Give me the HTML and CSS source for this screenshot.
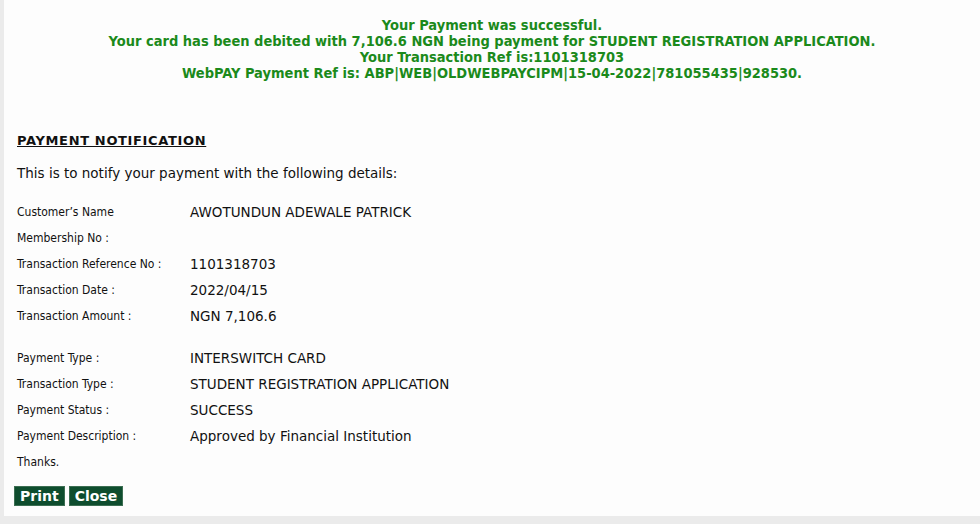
FILE: index.html
```html
<!DOCTYPE html>
<html>
<head>
<meta charset="utf-8">
<link rel="stylesheet" href="styles.css">
</head>
<body>
<div class="panel">
  <div class="banner">
    <div>Your Payment was successful.</div>
    <div>Your card has been debited with 7,106.6 NGN being payment for STUDENT REGISTRATION APPLICATION.</div>
    <div>Your Transaction Ref is:1101318703</div>
    <div>WebPAY Payment Ref is: ABP|WEB|OLDWEBPAYCIPM|15-04-2022|781055435|928530.</div>
  </div>
  <div class="content">
    <h2 class="title">PAYMENT NOTIFICATION</h2>
    <p class="intro">This is to notify your payment with the following details:</p>
    <div class="details">
      <div class="label">Customer’s Name</div><div class="value">AWOTUNDUN ADEWALE PATRICK</div>
      <div class="label">Membership No :</div><div class="value"></div>
      <div class="label">Transaction Reference No :</div><div class="value">1101318703</div>
      <div class="label">Transaction Date :</div><div class="value">2022/04/15</div>
      <div class="label">Transaction Amount :</div><div class="value">NGN 7,106.6</div>
    </div>
    <div class="details second">
      <div class="label">Payment Type :</div><div class="value">INTERSWITCH CARD</div>
      <div class="label">Transaction Type :</div><div class="value">STUDENT REGISTRATION APPLICATION</div>
      <div class="label">Payment Status :</div><div class="value">SUCCESS</div>
      <div class="label">Payment Description :</div><div class="value">Approved by Financial Institution</div>
      <div class="label">Thanks.</div><div class="value"></div>
    </div>
    <div class="actions">
      <button class="btn">Print</button>
      <button class="btn">Close</button>
    </div>
  </div>
</div>
</body>
</html>
```
FILE: styles.css
```css
html, body {
  margin: 0;
  padding: 0;
}
body {
  background: #ebebeb;
  height: 524px;
  overflow: hidden;
}
.panel {
  margin-left: 4px;
  height: 516px;
  background: #fdfdfd;
  box-sizing: border-box;
}
.banner {
  padding-top: 17px;
  text-align: center;
  color: #1b8a1b;
  font-family: "DejaVu Sans Condensed", "DejaVu Sans", sans-serif;
  font-weight: bold;
  font-size: 14.5px;
  line-height: 16px;
}
.content {
  padding-left: 13px;
  padding-top: 52px;
  color: #111;
}
.title {
  margin: 0;
  font-family: "DejaVu Sans", sans-serif;
  font-weight: bold;
  font-size: 13px;
  letter-spacing: 0.65px;
  line-height: 16px;
  text-decoration: underline;
}
.intro {
  margin: 16px 0 0 0;
  font-family: "DejaVu Sans", sans-serif;
  font-size: 13.5px;
  line-height: 16px;
}
.details {
  margin-top: 18px;
  display: grid;
  grid-template-columns: 173px auto;
  grid-auto-rows: 26px;
  align-items: center;
}
.details.second {
  margin-top: 16px;
}
.label {
  font-family: "DejaVu Sans Condensed", "DejaVu Sans", sans-serif;
  font-size: 12px;
}
.value {
  font-family: "DejaVu Sans", sans-serif;
  font-size: 13.5px;
}
.actions {
  margin-top: 11px;
  margin-left: -3px;
  display: flex;
  gap: 4px;
}
.btn {
  background: #0e4d2e;
  color: #fff;
  border: 1px solid #3c6e52;
  font-family: "DejaVu Sans", sans-serif;
  font-weight: bold;
  font-size: 14px;
  line-height: 17px;
  padding: 0 5px;
  margin: 0;
  height: 20px;
}
```
